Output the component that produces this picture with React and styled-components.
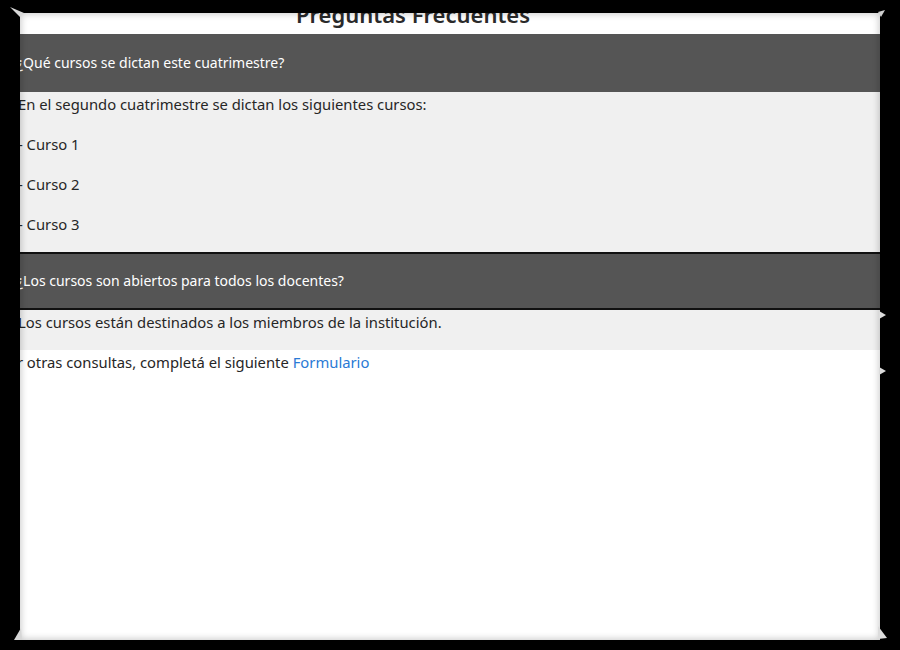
import React from "react";
import styled, { createGlobalStyle } from "styled-components";

const Global = createGlobalStyle`
  html, body { margin: 0; padding: 0; background: #000; }
  body { width: 900px; height: 650px; overflow: hidden; font-family: "Noto Sans", "Open Sans", sans-serif; }
`;

const Stage = styled.div`
  position: relative;
  width: 900px;
  height: 650px;
  padding: 13px 20px 10px 20px;
  box-sizing: border-box;
  display: flex;
`;

const Panel = styled.div`
  position: relative;
  flex: 1;
  background: #fff;
  overflow: hidden;
`;

const Vignette = styled.div`
  position: absolute;
  inset: 0;
  pointer-events: none;
  box-shadow: inset 0 0 7px 1px rgba(0, 0, 0, 0.22);
`;

const Content = styled.div`
  display: flex;
  flex-direction: column;
  margin-left: -18px;
  margin-top: -15px;
  width: 900px;
  color: #262626;
  font-size: 14.8px;
  line-height: 24px;
`;

const Title = styled.h2`
  margin: 0;
  padding-right: 78px;
  height: 36px;
  line-height: 33px;
  text-align: center;
  font-size: 22px;
  font-weight: 600;
  color: #2a2a2a;
`;

const Header = styled.div`
  background: #555;
  color: #fff;
  font-size: 14px;
  height: 54px;
  display: flex;
  align-items: center;
  padding-left: 15px;
  border-top: 2px solid ${(p) => (p.$divided ? "#111" : "#555")};
  border-bottom: 2px solid ${(p) => (p.$divided ? "#111" : "#555")};
`;

const Body = styled.div`
  background: #f0f0f0;
  display: flex;
  flex-direction: column;
  gap: 16px;
  padding: 0 16px 16px 16px;
`;

const Para = styled.p`
  margin: 0;
`;

const Footer = styled.p`
  margin: 0 0 0 -3px;
`;

const Link = styled.a`
  color: #2a7ad5;
  text-decoration: none;
`;

const Flare = styled.svg`
  position: absolute;
  left: ${(p) => p.$x}px;
  top: ${(p) => p.$y}px;
  pointer-events: none;
`;

export default function App() {
  return (
    <>
      <Global />
      <Stage>
        <Panel>
          <Content>
            <Title>Preguntas Frecuentes</Title>
            <Header>¿Qué cursos se dictan este cuatrimestre?</Header>
            <Body>
              <Para>En el segundo cuatrimestre se dictan los siguientes cursos:</Para>
              <Para>- Curso 1</Para>
              <Para>- Curso 2</Para>
              <Para>- Curso 3</Para>
            </Body>
            <Header $divided>¿Los cursos son abiertos para todos los docentes?</Header>
            <Body>
              <Para>Los cursos están destinados a los miembros de la institución.</Para>
            </Body>
            <Footer>
              Por otras consultas, completá el siguiente <Link href="#">Formulario</Link>
            </Footer>
          </Content>
          <Vignette />
        </Panel>
        <Flare $x={9} $y={6} width="16" height="12" viewBox="0 0 16 12">
          <path d="M1 1 L15 7 L11 11 Z" fill="#d8d8d8" />
        </Flare>
        <Flare $x={876} $y={9} width="10" height="10" viewBox="0 0 10 10">
          <path d="M9 1 L2 3 L5 8 Z" fill="#d0d0d0" />
        </Flare>
        <Flare $x={13} $y={627} width="10" height="14" viewBox="0 0 10 14">
          <path d="M1 13 L8 1 L9 13 Z" fill="#d6d6d6" />
        </Flare>
        <Flare $x={877} $y={624} width="12" height="16" viewBox="0 0 12 16">
          <path d="M1 2 L10 14 L1 15 Z" fill="#dcdcdc" />
        </Flare>
        <Flare $x={879} $y={310} width="8" height="10" viewBox="0 0 8 10">
          <path d="M0 1 L7 5 L0 9 Z" fill="#dcdcdc" />
        </Flare>
        <Flare $x={879} $y={366} width="8" height="10" viewBox="0 0 8 10">
          <path d="M0 1 L7 5 L0 9 Z" fill="#dcdcdc" />
        </Flare>
      </Stage>
    </>
  );
}
